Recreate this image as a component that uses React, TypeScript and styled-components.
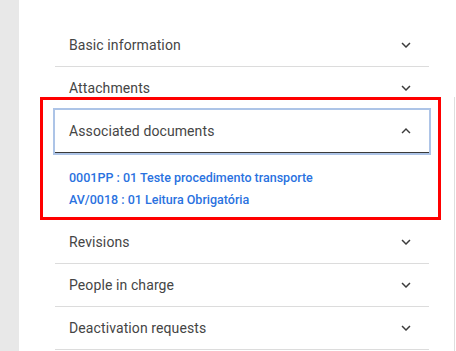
import React from "react";
import styled, { createGlobalStyle } from "styled-components";

const Global = createGlobalStyle`
  html, body { margin: 0; padding: 0; background: #fff; }
  body { font-family: Roboto, "Noto Sans", Arial, sans-serif; }
  #root { width: 456px; height: 351px; overflow: hidden; }
`;

const Page = styled.div`
  display: flex;
  width: 456px;
  height: 351px;
  background: #fff;
`;

const SideStrip = styled.div`
  width: 19px;
  flex: none;
  background: #e8e8e8;
`;

const Main = styled.div`
  flex: 1;
  position: relative;
  padding: 24px 0 0 36px;
`;

const RightEdge = styled.div`
  position: absolute;
  top: 97px;
  bottom: 0;
  right: 1px;
  width: 1px;
  background: #dedede;
`;

const List = styled.div`
  width: 374px;
  display: flex;
  flex-direction: column;
`;

const Item = styled.div<{ $highlight?: boolean }>`
  position: relative;
  ${(p) =>
    p.$highlight &&
    `
    &::after {
      content: "";
      position: absolute;
      left: -15px;
      right: -12px;
      top: -13px;
      height: 123px;
      border: 3px solid #ff0000;
      box-sizing: border-box;
      pointer-events: none;
    }
  `}
`;

const Header = styled.div<{ $open?: boolean }>`
  height: 42px;
  display: flex;
  align-items: center;
  justify-content: space-between;
  padding: 0 14px 0 14px;
  border-bottom: 1px solid ${(p) => (p.$open ? "#3a3a3a" : "#dcdcdc")};
  color: #454545;
  font-size: 14px;
  letter-spacing: 0.1px;
  ${(p) => p.$open && `outline: 2px solid #adc4e7; outline-offset: 0px;`}
`;

const Body = styled.div`
  display: flex;
  flex-direction: column;
  padding: 14px 14px 10px;
`;

const DocLink = styled.a`
  display: block;
  line-height: 22px;
  font-size: 12.5px;
  font-weight: 500;
  color: #2a72e0;
  text-decoration: none;
`;

const Chevron = ({ up }: { up?: boolean }) => (
  <svg width="18" height="18" viewBox="0 0 24 24" style={{ transform: up ? "rotate(180deg)" : undefined }}>
    <path fill="#3c3c3c" d="M16.59 8.59L12 13.17 7.41 8.59 6 10l6 6 6-6z" />
  </svg>
);

const sections = [
  "Basic information",
  "Attachments",
  "Associated documents",
  "Revisions",
  "People in charge",
  "Deactivation requests",
];

export default function App() {
  return (
    <Page>
      <Global />
      <SideStrip />
      <Main>
        <RightEdge />
        <List>
          {sections.map((s) => {
            const open = s === "Associated documents";
            return (
              <Item key={s} $highlight={open}>
                <Header $open={open}>
                  <span>{s}</span>
                  <Chevron up={open} />
                </Header>
                {open && (
                  <Body>
                    <DocLink href="#">0001PP : 01 Teste procedimento transporte</DocLink>
                    <DocLink href="#">AV/0018 : 01 Leitura Obrigatória</DocLink>
                  </Body>
                )}
              </Item>
            );
          })}
        </List>
      </Main>
    </Page>
  );
}
